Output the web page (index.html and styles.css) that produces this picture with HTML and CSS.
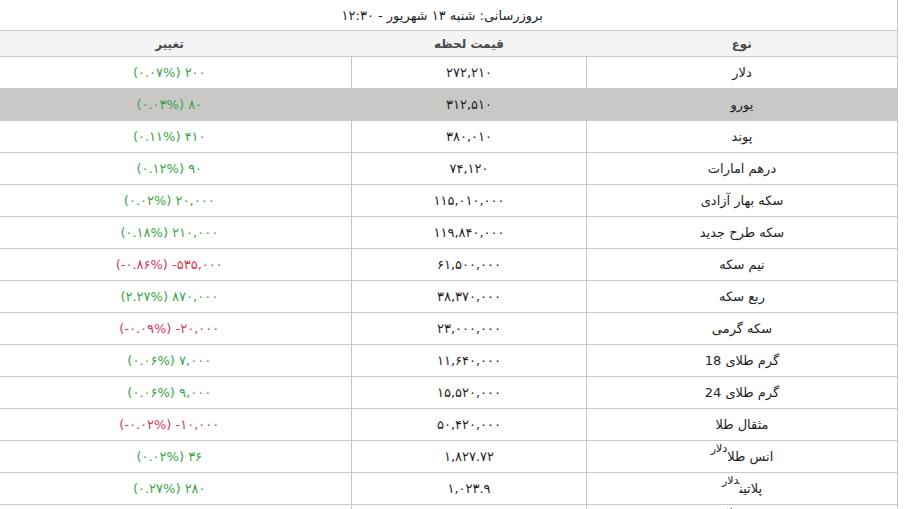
FILE: index.html
```html
<!DOCTYPE html>
<html lang="fa" dir="rtl">
<head>
<meta charset="utf-8">
<title>قیمت ارز و سکه</title>
<link rel="stylesheet" href="styles.css">
</head>
<body>
<table class="rates">
  <colgroup>
    <col class="c-type">
    <col class="c-price">
    <col class="c-change">
  </colgroup>
  <thead>
    <tr class="title-row"><th colspan="3">بروزرسانی: شنبه ۱۳ شهریور - ۱۲:۳۰</th></tr>
    <tr class="head-row"><th>نوع</th><th>قیمت لحظه</th><th>تغییر</th></tr>
  </thead>
  <tbody>
    <tr><td>دلار</td><td>۲۷۲,۲۱۰</td><td class="chg up"><span dir="ltr">۲۰۰</span> <span dir="ltr">(۰.۰۷%)</span></td></tr>
    <tr class="hl"><td>یورو</td><td>۳۱۲,۵۱۰</td><td class="chg up"><span dir="ltr">۸۰</span> <span dir="ltr">(۰.۰۳%)</span></td></tr>
    <tr><td>پوند</td><td>۳۸۰,۰۱۰</td><td class="chg up"><span dir="ltr">۴۱۰</span> <span dir="ltr">(۰.۱۱%)</span></td></tr>
    <tr><td>درهم امارات</td><td>۷۴,۱۲۰</td><td class="chg up"><span dir="ltr">۹۰</span> <span dir="ltr">(۰.۱۲%)</span></td></tr>
    <tr><td>سکه بهار آزادی</td><td>۱۱۵,۰۱۰,۰۰۰</td><td class="chg up"><span dir="ltr">۲۰,۰۰۰</span> <span dir="ltr">(۰.۰۲%)</span></td></tr>
    <tr><td>سکه طرح جدید</td><td>۱۱۹,۸۴۰,۰۰۰</td><td class="chg up"><span dir="ltr">۲۱۰,۰۰۰</span> <span dir="ltr">(۰.۱۸%)</span></td></tr>
    <tr><td>نیم سکه</td><td>۶۱,۵۰۰,۰۰۰</td><td class="chg down"><span dir="ltr">-۵۳۵,۰۰۰</span> <span dir="ltr">(-۰.۸۶%)</span></td></tr>
    <tr><td>ربع سکه</td><td>۳۸,۳۷۰,۰۰۰</td><td class="chg up"><span dir="ltr">۸۷۰,۰۰۰</span> <span dir="ltr">(۲.۲۷%)</span></td></tr>
    <tr><td>سکه گرمی</td><td>۲۳,۰۰۰,۰۰۰</td><td class="chg down"><span dir="ltr">-۲۰,۰۰۰</span> <span dir="ltr">(-۰.۰۹%)</span></td></tr>
    <tr><td>گرم طلای 18</td><td>۱۱,۶۴۰,۰۰۰</td><td class="chg up"><span dir="ltr">۷,۰۰۰</span> <span dir="ltr">(۰.۰۶%)</span></td></tr>
    <tr><td>گرم طلای 24</td><td>۱۵,۵۲۰,۰۰۰</td><td class="chg up"><span dir="ltr">۹,۰۰۰</span> <span dir="ltr">(۰.۰۶%)</span></td></tr>
    <tr><td>مثقال طلا</td><td>۵۰,۴۲۰,۰۰۰</td><td class="chg down"><span dir="ltr">-۱۰,۰۰۰</span> <span dir="ltr">(-۰.۰۲%)</span></td></tr>
    <tr><td>انس طلا<sup>دلار</sup></td><td>۱,۸۲۷.۷۲</td><td class="chg up"><span dir="ltr">۳۶</span> <span dir="ltr">(۰.۰۲%)</span></td></tr>
    <tr><td>پلاتین<sup>دلار</sup></td><td>۱,۰۲۳.۹</td><td class="chg up"><span dir="ltr">۲۸۰</span> <span dir="ltr">(۰.۲۷%)</span></td></tr>
    <tr class="last"><td><span class="ghost">نقره</span><sup>دلار</sup></td><td></td><td></td></tr>
  </tbody>
</table>
</body>
</html>
```
FILE: styles.css
```css
html, body {
  margin: 0;
  padding: 0;
  background: #ffffff;
}

body {
  font-family: "DejaVu Sans", "Noto Sans", sans-serif;
  font-size: 13px;
  color: #1e1e1e;
}

.rates {
  width: 910px;
  margin-right: 10px;
  border-collapse: collapse;
  table-layout: fixed;
  border-right: 1px solid #c8c8c8;
}

.c-type { width: 311px; }
.c-price { width: 235px; }
.c-change { width: 364px; }

.rates th,
.rates td {
  text-align: center;
  padding: 0;
  font-weight: normal;
}

.title-row th {
  height: 30px;
  font-size: 13px;
  color: #1e1e1e;
  border-bottom: 1px solid #c8c8c8;
}

.head-row th {
  height: 25px;
  background: #f4f4f4;
  font-weight: bold;
  font-size: 12px;
  color: #4a4a4a;
  border-bottom: 1px solid #c8c8c8;
}

.rates tbody td {
  height: 31px;
  border-bottom: 1px solid #c8c8c8;
  border-left: 1px solid #c8c8c8;
  color: #1e1e1e;
}

.rates tbody td.chg {
  border-left: none;
}

.rates tbody tr.last td:last-child {
  border-left: none;
}

.rates td.up { color: #34a745; }
.rates td.down { color: #d33a55; }

.rates tr.hl td {
  background: #c9c8c6;
}

.rates sup {
  font-size: 11px;
  vertical-align: 9px;
  line-height: 0;
}

.ghost {
  visibility: hidden;
}
```
